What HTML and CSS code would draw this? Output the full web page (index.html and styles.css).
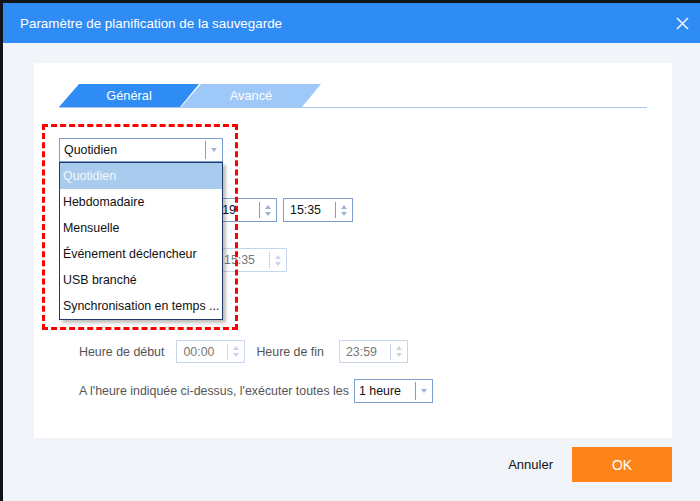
FILE: index.html
```html
<!DOCTYPE html>
<html lang="fr">
  <head>
    <meta charset="UTF-8" />
    <title>Paramètre de planification de la sauvegarde</title>
    <link rel="stylesheet" href="styles.css">
  </head>
  <body>
    <div class="dialog">
      <div class="titlebar">
        <span class="title">Paramètre de planification de la sauvegarde</span>
        <svg class="close" width="13" height="13" viewBox="0 0 13 13">
          <path d="M1 1 L12 12 M12 1 L1 12" stroke="#e8f1ff" stroke-width="1.7" fill="none" />
        </svg>
      </div>
      <div class="content">
        <div class="panel">
          <div class="tabs">
            <div class="tab active">Général</div>
            <div class="tab">Avancé</div>
          </div>

          <div class="row row-type">
            <div class="select select-type">
              <span class="val">Quotidien</span>
              <span class="drop"><i class="down"></i></span>
            </div>
          </div>

          <div class="row row-date">
            <div class="spin spin-date">
              <span class="val">2023/10/19</span>
              <span class="btns"><i class="up"></i><i class="down"></i></span>
            </div>
            <div class="spin">
              <span class="val">15:35</span>
              <span class="btns"><i class="up"></i><i class="down"></i></span>
            </div>
          </div>

          <div class="row row-once">
            <div class="spin off">
              <span class="val">15:35</span>
              <span class="btns"><i class="up"></i><i class="down"></i></span>
            </div>
          </div>

          <div class="row row-range">
            <span class="label">Heure de début</span>
            <div class="spin off short">
              <span class="val">00:00</span>
              <span class="btns"><i class="up"></i><i class="down"></i></span>
            </div>
            <span class="label label-end">Heure de fin</span>
            <div class="spin off short">
              <span class="val">23:59</span>
              <span class="btns"><i class="up"></i><i class="down"></i></span>
            </div>
          </div>

          <div class="row row-every">
            <span class="label">A l'heure indiquée ci-dessus, l'exécuter toutes les</span>
            <div class="select select-hour">
              <span class="val">1 heure</span>
              <span class="drop"><i class="down"></i></span>
            </div>
          </div>

          <!-- dropdown opened over the form -->
          <ul class="options">
            <li class="selected">Quotidien</li>
            <li>Hebdomadaire</li>
            <li>Mensuelle</li>
            <li>Événement déclencheur</li>
            <li>USB branché</li>
            <li>Synchronisation en temps ...</li>
          </ul>
          <div class="highlight"></div>
        </div>

        <div class="buttons">
          <button class="cancel">Annuler</button>
          <button class="ok">OK</button>
        </div>
      </div>
    </div>
  </body>
</html>
```

FILE: styles.css
```css
body {
  margin: 0;
  padding: 3px 0 0 3px;
  background: #111418;
  font-family: "Liberation Sans", Arial, sans-serif;
  font-size: 12.4px;
  color: #111;
}

.dialog {
  width: 697px;
  height: 498px;
  background: #f1f4f9;
  display: flex;
  flex-direction: column;
}

.titlebar {
  height: 40px;
  background: #2f8cf4;
  display: flex;
  align-items: center;
  justify-content: space-between;
  padding: 0 11px 0 17px;
}

.title {
  color: #fff;
  font-size: 13.4px;
}

.content {
  flex: 1;
  padding: 20px 28px 0 31px;
}

.panel {
  position: relative;
  height: 375px;
  background: #fff;
  padding: 21px 25px 0;
  box-sizing: border-box;
}

/* tabs */
.tabs {
  display: flex;
  height: 23px;
  border-bottom: 1px solid #a9c7ee;
}

.tab {
  width: 140px;
  height: 23px;
  line-height: 23px;
  text-align: center;
  color: #fff;
  font-size: 12.8px;
  background: #9ec8f7;
  clip-path: polygon(20px 0, 140px 0, 121px 100%, 0 100%);
}

.tab.active {
  background: #2f8cf4;
}

.tab + .tab {
  margin-left: -18px;
}

/* form rows */
.row {
  display: flex;
  align-items: center;
}

.row-type {
  margin-top: 30px;
}

.row-date {
  margin-top: 36px;
  padding-left: 108px;
  gap: 6px;
}

.row-once {
  margin-top: 26px;
  padding-left: 158px;
}

.row-range {
  margin-top: 68px;
  padding-left: 20px;
}

.row-every {
  margin-top: 16px;
  padding-left: 20px;
  gap: 5px;
}

.label {
  color: #555;
}

.row-range .label {
  margin-right: 12px;
}

.row-range .label-end {
  margin-left: 11px;
  margin-right: 15px;
}

.spin,
.select {
  display: flex;
  align-items: center;
  box-sizing: border-box;
  height: 24px;
  border: 1px solid #7d9fd0;
  background: #fff;
}

.spin {
  width: 70px;
}

.spin-date {
  width: 110px;
}

.spin.short {
  width: 69px;
  height: 23px;
}

.spin .val,
.select .val {
  flex: 1;
  padding-left: 6px;
}

.select .val {
  padding-left: 4px;
}

.btns,
.drop {
  width: 16px;
  height: 16px;
  border-left: 1px solid #7d9fd0;
  display: flex;
  flex-direction: column;
  align-items: center;
  justify-content: center;
  gap: 3px;
}

.drop {
  width: 16px;
  height: 18px;
}

.up,
.down {
  width: 0;
  height: 0;
  border-left: 3.5px solid transparent;
  border-right: 3.5px solid transparent;
}

.up {
  border-bottom: 4px solid #9eb3d3;
}

.down {
  border-top: 4px solid #9eb3d3;
}

.spin.off {
  border-color: #c6d6ec;
}

.spin.off .val {
  color: #777;
}

.spin.off .btns {
  border-left-color: #c6d6ec;
}

.spin.off .up {
  border-bottom-color: #c9d5e6;
}

.spin.off .down {
  border-top-color: #c9d5e6;
}

.select-type {
  width: 164px;
}

.select-hour {
  width: 79px;
}

/* open list */
.options {
  position: absolute;
  left: 25px;
  top: 99px;
  width: 164px;
  margin: 0;
  padding: 0;
  list-style: none;
  background: #fff;
  border: 1px solid #1d3b66;
  box-sizing: border-box;
  box-shadow: 3px 3px 3px rgba(0, 0, 0, 0.25);
}

.options li {
  height: 26px;
  line-height: 26px;
  padding-left: 3px;
  white-space: nowrap;
}

.options li.selected {
  background: #a9cbee;
  color: #f3f7fc;
}

.highlight {
  position: absolute;
  left: 8px;
  top: 61px;
  width: 196px;
  height: 206px;
  box-sizing: border-box;
  border: 3px dashed #f00;
}

/* bottom buttons */
.buttons {
  display: flex;
  justify-content: flex-end;
  align-items: center;
  margin-top: 9px;
  gap: 19px;
}

button {
  font-family: "Liberation Sans", Arial, sans-serif;
  font-size: 13px;
  border: none;
  cursor: pointer;
}

.cancel {
  background: none;
  color: #111;
  padding: 0;
}

.ok {
  width: 100px;
  height: 35px;
  background: #fd8419;
  color: #fff;
  font-size: 14px;
}
```
